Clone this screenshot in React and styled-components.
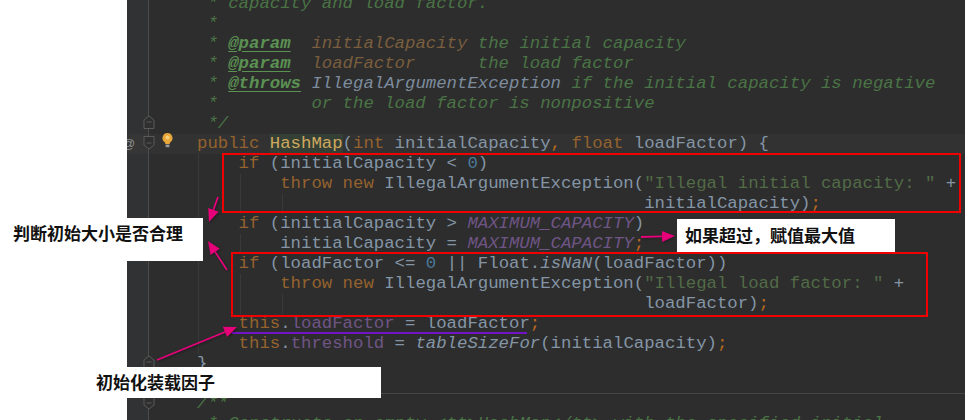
import React from 'react';
import styled, { createGlobalStyle } from 'styled-components';

const GlobalStyle = createGlobalStyle`
  html, body {
    margin: 0;
    padding: 0;
    background: #fff;
  }
  #root {
    width: 965px;
    height: 420px;
    overflow: hidden;
  }
`;

const Page = styled.div`
  position: relative;
  display: flex;
  width: 965px;
  height: 420px;
  overflow: hidden;
  background: #fff;
`;

const Blank = styled.div`
  flex: 0 0 127px;
  background: #fff;
`;

const Editor = styled.div`
  flex: 1;
  height: 420px;
  overflow: hidden;
  background: #2d2d2d;
`;

const Lines = styled.div`
  margin-top: -6px;
  display: flex;
  flex-direction: column;
`;

const Row = styled.div`
  position: relative;
  display: flex;
  height: 20px;
  background: ${({ active }) => (active ? '#323232' : 'transparent')};
`;

const Gutter = styled.div`
  flex: 0 0 21px;
  box-sizing: content-box;
  background: ${({ active }) => (active ? '#363636' : '#313233')};
  border-right: 1px solid #4c4c4c;
`;

const Marks = styled.div`
  flex: 0 0 48px;
`;

const Code = styled.pre`
  flex: 1;
  margin: 0;
  height: 20px;
  box-sizing: border-box;
  font-family: "Liberation Mono", "Courier New", monospace;
  font-size: 17.33px;
  line-height: 20px;
  color: #8495a6;
  white-space: pre;
  border-bottom: ${({ separator }) => (separator ? '1px solid #454545' : 'none')};
  background-image: ${({ guides = [] }) =>
    guides.length
      ? guides.map(() => 'linear-gradient(#3a3a3a, #3a3a3a)').join(', ')
      : 'none'};
  background-size: 1px 100%;
  background-repeat: no-repeat;
  background-position: ${({ guides = [] }) => guides.map((g) => `${g}px 0`).join(', ') || '0 0'};
`;

const Kw = styled.span`
  color: #94622e;
`;

const Semi = styled.span`
  color: #b8691f;
`;

const Doc = styled.span`
  color: #4a7445;
  font-style: italic;
`;

const DocTag = styled.span`
  color: #5b9152;
  font-style: italic;
  font-weight: 700;
  text-decoration: underline;
  text-underline-offset: 3px;
`;

const DocParam = styled.span`
  color: #7a5e3d;
  font-style: italic;
`;

const DocClass = styled.span`
  color: #7d8c9d;
  font-style: italic;
`;

const Str = styled.span`
  color: #526b47;
`;

const Num = styled.span`
  color: #4c7898;
`;

const Field = styled.span`
  color: #6f5585;
`;

const Constant = styled.span`
  color: #6f5585;
  font-style: italic;
`;

const Static = styled.span`
  color: #8495a6;
  font-style: italic;
`;

const Method = styled.span`
  color: #cfa85f;
  background: #344035;
`;

const At = styled.span`
  position: absolute;
  left: -5px;
  top: 0;
  font-family: "Liberation Sans", sans-serif;
  font-size: 13px;
  line-height: 20px;
  color: #8c8c8c;
`;

const FoldIcon = styled.svg`
  position: absolute;
  left: 16px;
  top: ${({ $up }) => ($up ? 1 : 2)}px;
  width: 12px;
  height: 14px;
`;

const Bulb = styled.svg`
  position: absolute;
  left: 34px;
  top: -2px;
  width: 13px;
  height: 17px;
`;

const Highlight = styled.div`
  position: absolute;
  box-sizing: border-box;
  left: ${({ x }) => x}px;
  top: ${({ y }) => y}px;
  width: ${({ w }) => w}px;
  height: ${({ h }) => h}px;
  border: 2px solid #f00000;
`;

const Underline = styled.div`
  position: absolute;
  left: 232px;
  top: 332px;
  width: 295px;
  height: 2px;
  background: #7412c8;
`;

const Note = styled.div`
  position: absolute;
  display: flex;
  align-items: center;
  box-sizing: border-box;
  left: ${({ x }) => x}px;
  top: ${({ y }) => y}px;
  width: ${({ w }) => w}px;
  height: ${({ h }) => h}px;
  padding: 0 0 ${({ lift = 0 }) => lift}px ${({ pad = 0 }) => pad}px;
  background: #fff;
  color: #111;
  font-family: "Liberation Sans", "Noto Sans CJK SC", sans-serif;
  font-size: 17px;
  font-weight: 700;
  white-space: nowrap;
`;

const Arrows = styled.svg`
  position: absolute;
  left: 0;
  top: 0;
  width: 965px;
  height: 420px;
  pointer-events: none;
  filter: drop-shadow(1px 1px 1px rgba(0, 0, 0, 0.35));
`;

function Fold({ up }) {
  return (
    <FoldIcon $up={up} viewBox="0 0 12 14" fill="none" stroke="#5a5a5a">
      {up ? (
        <path d="M1 13.5V5L6 1l5 4v8.5z" fill="#2f2f2f" />
      ) : (
        <path d="M1 .5V9l5 4 5-4V.5z" fill="#2f2f2f" />
      )}
      <path d="M3.5 7h5" />
    </FoldIcon>
  );
}

function Arrow({ from, to }) {
  const [x1, y1] = from;
  const [x2, y2] = to;
  const a = Math.atan2(y2 - y1, x2 - x1);
  const len = 13;
  const spread = 5.5;
  const bx = x2 - Math.cos(a) * len;
  const by = y2 - Math.sin(a) * len;
  const px = -Math.sin(a) * spread;
  const py = Math.cos(a) * spread;
  return (
    <g fill="#e6007a" stroke="#e6007a">
      <line x1={x1} y1={y1} x2={bx} y2={by} strokeWidth="1.8" />
      <polygon
        stroke="none"
        points={`${x2},${y2} ${bx + px},${by + py} ${bx - px},${by - py}`}
      />
    </g>
  );
}

const source = [
  { code: <Doc> * capacity and load factor.</Doc> },
  { code: <Doc> *</Doc> },
  { code: <Doc> * <DocTag>@param</DocTag>  <DocParam>initialCapacity</DocParam> the initial capacity</Doc> },
  { code: <Doc> * <DocTag>@param</DocTag>  <DocParam>loadFactor</DocParam>      the load factor</Doc> },
  { code: <Doc> * <DocTag>@throws</DocTag> <DocClass>IllegalArgumentException</DocClass> if the initial capacity is negative</Doc> },
  { code: <Doc> *         or the load factor is nonpositive</Doc> },
  { code: <Doc> */</Doc>, fold: 'up' },
  {
    code: <><Kw>public</Kw> <Method>HashMap</Method>(<Kw>int</Kw> initialCapacity<Semi>,</Semi> <Kw>float</Kw> loadFactor) {'{'}</>,
    fold: 'down',
    active: true,
  },
  { code: <>    <Kw>if</Kw> (initialCapacity {'<'} <Num>0</Num>)</>, guides: [1] },
  { code: <>        <Kw>throw new</Kw> IllegalArgumentException(<Str>"Illegal initial capacity: "</Str> +</>, guides: [1, 43] },
  { code: <>                                           initialCapacity)<Semi>;</Semi></>, guides: [1, 43, 85] },
  { code: <>    <Kw>if</Kw> (initialCapacity {'>'} <Constant>MAXIMUM_CAPACITY</Constant>)</>, guides: [1] },
  { code: <>        initialCapacity = <Constant>MAXIMUM_CAPACITY</Constant><Semi>;</Semi></>, guides: [1, 43] },
  { code: <>    <Kw>if</Kw> (loadFactor {'<='} <Num>0</Num> || Float.<Static>isNaN</Static>(loadFactor))</>, guides: [1] },
  { code: <>        <Kw>throw new</Kw> IllegalArgumentException(<Str>"Illegal load factor: "</Str> +</>, guides: [1, 43] },
  { code: <>                                           loadFactor)<Semi>;</Semi></>, guides: [1, 43, 85] },
  { code: <>    <Kw>this</Kw>.<Field>loadFactor</Field> = loadFactor<Semi>;</Semi></>, guides: [1] },
  { code: <>    <Kw>this</Kw>.<Field>threshold</Field> = <Static>tableSizeFor</Static>(initialCapacity)<Semi>;</Semi></>, guides: [1] },
  { code: <>{'}'}</>, fold: 'up' },
  { code: '', separator: true },
  { code: <Doc>/**</Doc>, fold: 'down' },
  { code: <Doc> * Constructs an empty {'<tt>'}HashMap{'</tt>'} with the specified initial</Doc> },
];

export default function App() {
  return (
    <>
      <GlobalStyle />
      <Page>
        <Blank />
        <Editor>
          <Lines>
            {source.map((line, i) => (
              <Row key={i} active={line.active}>
                <Gutter active={line.active} />
                <Marks />
                {line.fold && <Fold up={line.fold === 'up'} />}
                {line.active && (
                  <>
                    <At>@</At>
                    <Bulb viewBox="0 0 13 17">
                      <path d="M6.5 1a5 5 0 0 0-3 9c.6.6.8 1.2.9 2h4.2c.1-.8.3-1.4.9-2a5 5 0 0 0-3-9z" fill="#e8a63a" />
                      <circle cx="6.5" cy="5.5" r="2" fill="#f4cf7a" />
                      <path d="M4.6 12.6h3.8v2.6H4.6z" fill="#9a9a9a" />
                    </Bulb>
                  </>
                )}
                <Code guides={line.guides} separator={line.separator}>{line.code}</Code>
              </Row>
            ))}
          </Lines>
        </Editor>

        <Highlight x={222} y={153} w={739} h={60} />
        <Highlight x={231} y={252} w={697} h={65} />
        <Underline />

        <Note x={0} y={218} w={203} h={43} pad={13} lift={14}>判断初始大小是否合理</Note>
        <Note x={677} y={219} w={218} h={33} pad={8} lift={2}>如果超过，赋值最大值</Note>
        <Note x={96} y={367} w={285} h={31} lift={3}>初始化装载因子</Note>

        <Arrows viewBox="0 0 965 420">
          <Arrow from={[218, 197]} to={[209, 222]} />
          <Arrow from={[227, 270]} to={[208, 241]} />
          <Arrow from={[157, 360]} to={[237, 327]} />
          <Arrow from={[641, 237]} to={[675, 236]} />
        </Arrows>
      </Page>
    </>
  );
}
